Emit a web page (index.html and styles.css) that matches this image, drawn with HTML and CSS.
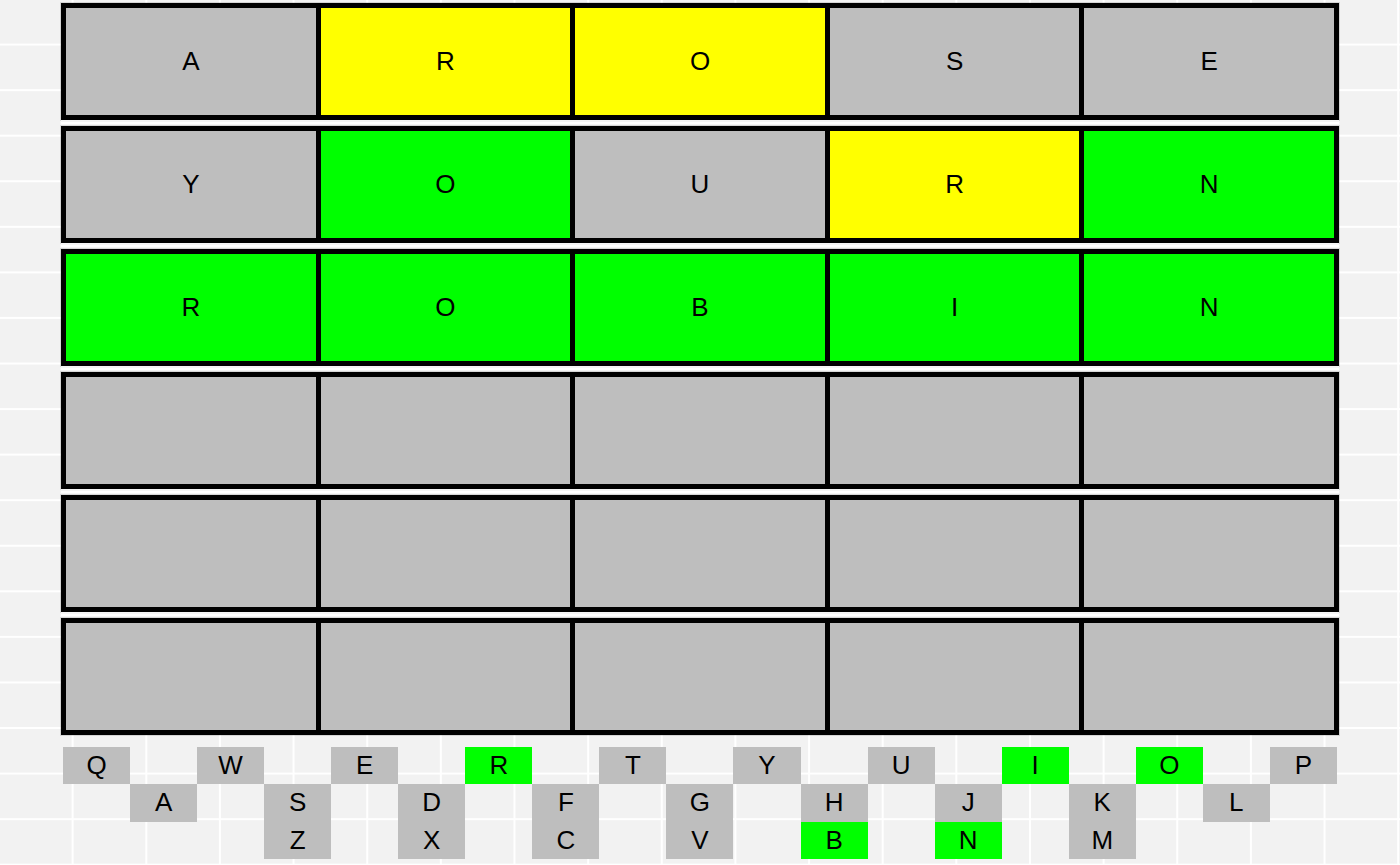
FILE: index.html
```html
<!DOCTYPE html>
<html lang="en">
<head>
    <meta charset="UTF-8">
    <title>Wordle Board</title>
    <link rel="stylesheet" href="styles.css">
</head>
<body>

<div class="plot">
    <div class="board">
        <div class="guess">
            <div class="tile miss">A</div>
            <div class="tile near">R</div>
            <div class="tile near">O</div>
            <div class="tile miss">S</div>
            <div class="tile miss">E</div>
        </div>
        <div class="gap"></div>
        <div class="guess">
            <div class="tile miss">Y</div>
            <div class="tile hit">O</div>
            <div class="tile miss">U</div>
            <div class="tile near">R</div>
            <div class="tile hit">N</div>
        </div>
        <div class="gap"></div>
        <div class="guess">
            <div class="tile hit">R</div>
            <div class="tile hit">O</div>
            <div class="tile hit">B</div>
            <div class="tile hit">I</div>
            <div class="tile hit">N</div>
        </div>
        <div class="gap"></div>
        <div class="guess">
            <div class="tile miss"></div>
            <div class="tile miss"></div>
            <div class="tile miss"></div>
            <div class="tile miss"></div>
            <div class="tile miss"></div>
        </div>
        <div class="gap"></div>
        <div class="guess">
            <div class="tile miss"></div>
            <div class="tile miss"></div>
            <div class="tile miss"></div>
            <div class="tile miss"></div>
            <div class="tile miss"></div>
        </div>
        <div class="gap"></div>
        <div class="guess">
            <div class="tile miss"></div>
            <div class="tile miss"></div>
            <div class="tile miss"></div>
            <div class="tile miss"></div>
            <div class="tile miss"></div>
        </div>
    </div>

    <!-- keyboard: keys are staggered by half a key, one unit = one key width -->
    <div class="keyboard">
        <div class="key-row">
            <div class="key">Q</div>
            <div class="key">W</div>
            <div class="key">E</div>
            <div class="key hit">R</div>
            <div class="key">T</div>
            <div class="key">Y</div>
            <div class="key">U</div>
            <div class="key hit">I</div>
            <div class="key hit">O</div>
            <div class="key">P</div>
        </div>
        <div class="key-row row-2">
            <div class="key">A</div>
            <div class="key">S</div>
            <div class="key">D</div>
            <div class="key">F</div>
            <div class="key">G</div>
            <div class="key">H</div>
            <div class="key">J</div>
            <div class="key">K</div>
            <div class="key">L</div>
        </div>
        <div class="key-row row-3">
            <div class="key">Z</div>
            <div class="key">X</div>
            <div class="key">C</div>
            <div class="key">V</div>
            <div class="key hit">B</div>
            <div class="key hit">N</div>
            <div class="key">M</div>
        </div>
    </div>
</div>

</body>
</html>
```

FILE: styles.css
```css
body {
    margin: 0;
    padding: 0;
    font-family: "Liberation Sans", Arial, sans-serif;
    color: #000;
    background-color: #f2f2f2;
}
.plot {
    width: 1400px;
    height: 865px;
    box-sizing: border-box;
    padding: 3px 0 0 61px;
    background-color: #f2f2f2;
    background-image:
        linear-gradient(to right, transparent calc(100% - 2px), #fff calc(100% - 2px)),
        linear-gradient(to bottom, transparent calc(100% - 2px), #fff calc(100% - 2px));
    background-size: 73.65px 100%, 100% 45.57px;
    background-position: 0 0, 0 0;
    overflow: hidden;
}
.board {
    width: 1278px;
}
.guess {
    display: grid;
    grid-template-columns: repeat(5, 1fr);
    column-gap: 5px;
    padding: 5px;
    height: 117px;
    box-sizing: border-box;
    background-color: #000;
    box-shadow: 0 0 0 1px rgba(0, 0, 0, 0.12);
}
.gap {
    height: 6px;
    background: linear-gradient(to bottom, #f4f4f4 0, #f4f4f4 2px, #fff 2px, #fff 4px, #f4f4f4 4px);
}
.tile {
    display: flex;
    align-items: center;
    justify-content: center;
    font-size: 26px;
}
.miss {
    background-color: #bebebe;
}
.near {
    background-color: #ffff00;
}
.hit {
    background-color: #00ff00;
}
.keyboard {
    --unit: calc(1274px / 19);
    width: 1274px;
    margin: 12px 0 0 2px;
}
.key-row {
    display: flex;
    gap: var(--unit);
    height: 37.33px;
}
.row-2 {
    padding-left: var(--unit);
}
.row-3 {
    padding-left: calc(var(--unit) * 3);
}
.key {
    width: var(--unit);
    flex: none;
    display: flex;
    align-items: center;
    justify-content: center;
    font-size: 26px;
    background-color: #bebebe;
}
.key.hit {
    background-color: #00ff00;
}
```
